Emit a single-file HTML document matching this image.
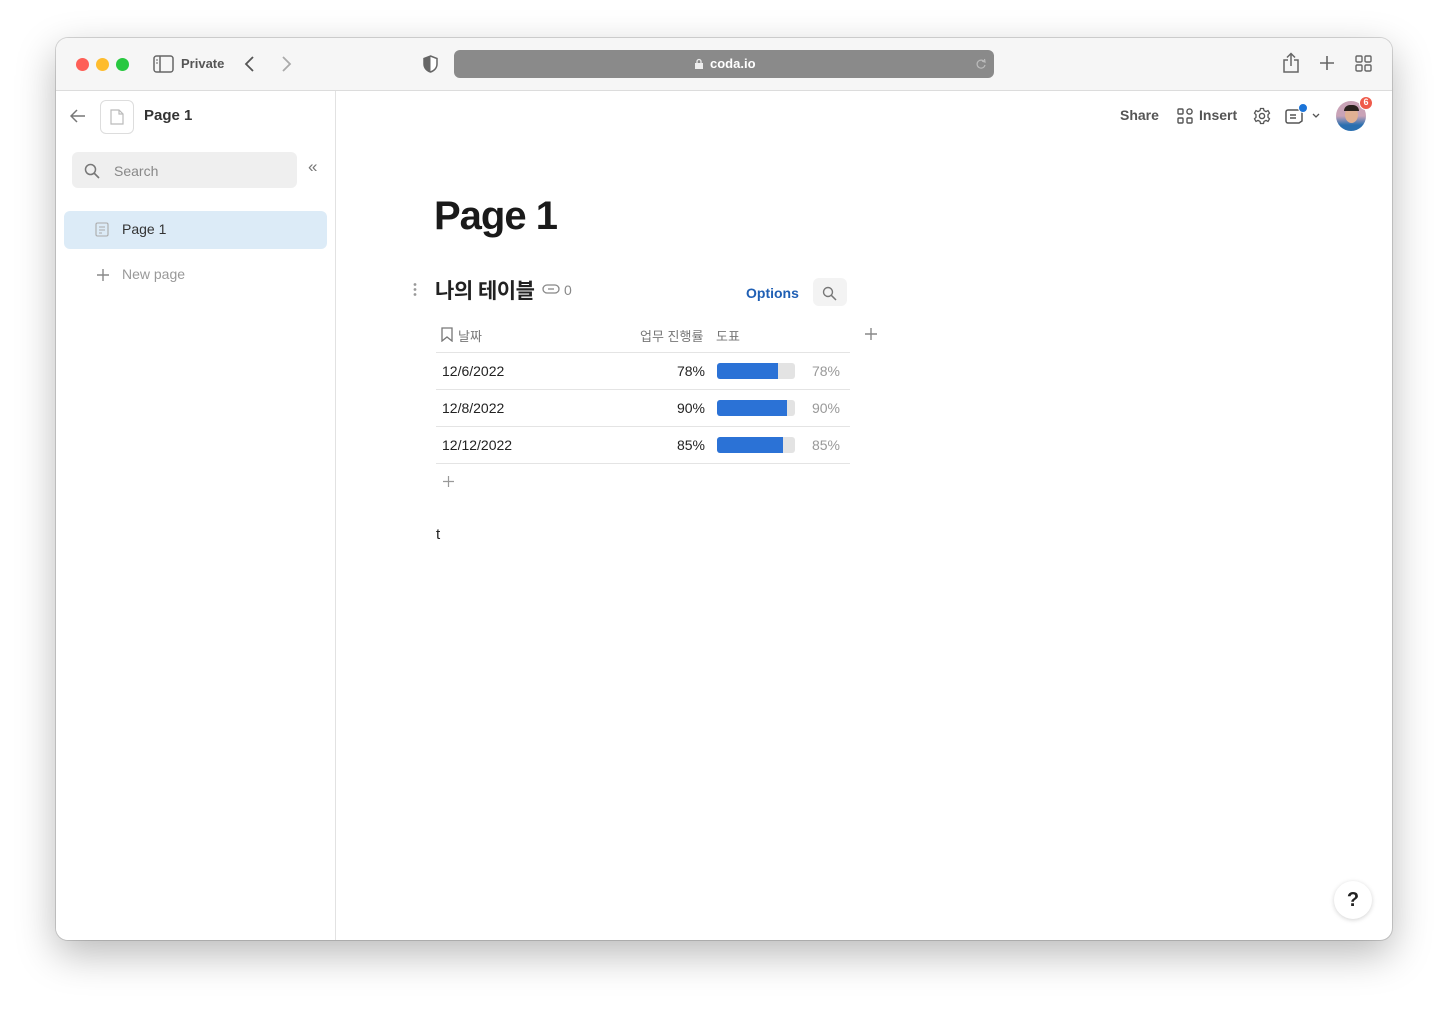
<!DOCTYPE html>
<html><head><meta charset="utf-8"><style>
*{box-sizing:border-box;margin:0;padding:0}
body{width:1448px;height:1014px;background:#fff;font-family:"Liberation Sans","Noto Sans CJK KR",sans-serif;position:relative;overflow:hidden;color:#222}
.win{position:absolute;left:56px;top:38px;width:1336px;height:902px;border-radius:12px;background:#fff;box-shadow:0 14px 40px rgba(0,0,0,.28),0 0 0 1px rgba(0,0,0,.15);overflow:hidden}
.tb{position:absolute;left:0;top:0;width:100%;height:53px;background:#f6f6f6;border-bottom:1px solid #dcdcdc}
.dot{position:absolute;top:20px;width:13px;height:13px;border-radius:50%}
.abs{position:absolute}
.side{position:absolute;left:0;top:53px;width:280px;bottom:0;border-right:1px solid #e2e2e2;background:#fff}
svg{position:absolute}
</style></head><body>
<div class="win">
 <div class="tb">
  <div class="dot" style="left:20px;background:#fe5f57"></div>
  <div class="dot" style="left:40px;background:#febc2e"></div>
  <div class="dot" style="left:60px;background:#28c840"></div>
  <svg style="left:97px;top:17px" width="21" height="18" viewBox="0 0 21 18"><rect x="1" y="1" width="19" height="16" rx="2.5" fill="none" stroke="#666" stroke-width="1.5"/><line x1="7" y1="1" x2="7" y2="17" stroke="#666" stroke-width="1.5"/><line x1="3" y1="5" x2="5" y2="5" stroke="#666"/><line x1="3" y1="8" x2="5" y2="8" stroke="#666"/></svg>
  <div class="abs" style="left:125px;top:18px;font-size:13px;font-weight:bold;color:#555">Private</div>
  <svg style="left:188px;top:17px" width="12" height="18"><path d="M9 2 L2 9 L9 16" fill="none" stroke="#555" stroke-width="1.8"/></svg>
  <svg style="left:224px;top:17px" width="12" height="18"><path d="M3 2 L10 9 L3 16" fill="none" stroke="#aaa" stroke-width="1.8"/></svg>
  <svg style="left:367px;top:17px" width="15" height="18"><path d="M7.5 1 L14 3.5 V9 C14 13 11 16 7.5 17 C4 16 1 13 1 9 V3.5 Z" fill="#fff" stroke="#666" stroke-width="1.5"/><path d="M7.5 1 V17 C4 16 1 13 1 9 V3.5Z" fill="#666"/></svg>
  <div class="abs" style="left:398px;top:12px;width:540px;height:28px;border-radius:6px;background:#8a8a8a"></div>
  <svg style="left:638px;top:20px" width="10" height="12"><rect x="1" y="5" width="8" height="6" fill="#eee"/><path d="M3 5 V3.5 A2 2 0 0 1 7 3.5 V5" fill="none" stroke="#eee" stroke-width="1.3"/></svg>
  <div class="abs" style="left:654px;top:18px;font-size:13px;color:#fff;font-weight:bold">coda.io</div>
  <svg style="left:919px;top:20px" width="12" height="12"><path d="M9.5 4 A4 4 0 1 0 10 7" fill="none" stroke="#bbb" stroke-width="1.2"/><path d="M7 3 L10 4 L9.5 1" fill="none" stroke="#bbb" stroke-width="1.2"/></svg>
  <svg style="left:1226px;top:14px" width="18" height="22"><path d="M6 8 H2 V20 H16 V8 H12" fill="none" stroke="#666" stroke-width="1.5"/><path d="M9 14 V2 M5 5.5 L9 1.5 L13 5.5" fill="none" stroke="#666" stroke-width="1.5"/></svg>
  <svg style="left:1263px;top:17px" width="16" height="16"><path d="M8 1 V15 M1 8 H15" stroke="#666" stroke-width="1.6"/></svg>
  <svg style="left:1299px;top:17px" width="17" height="17"><g fill="none" stroke="#666" stroke-width="1.4"><rect x="1" y="1" width="6" height="6" rx="1.2"/><rect x="10" y="1" width="6" height="6" rx="1.2"/><rect x="1" y="10" width="6" height="6" rx="1.2"/><rect x="10" y="10" width="6" height="6" rx="1.2"/></g></svg>
 </div>
 <div class="side">
  <svg style="left:14px;top:18px" width="16" height="14"><path d="M7 1 L1 7 L7 13 M1 7 H15" fill="none" stroke="#777" stroke-width="1.5"/></svg>
  <div class="abs" style="left:44px;top:9px;width:34px;height:34px;border:1px solid #ddd;border-radius:6px"></div>
  <svg style="left:54px;top:18px" width="14" height="16"><path d="M1 1 H9 L13 5 V15 H1 Z M9 1 V5 H13" fill="none" stroke="#bbb" stroke-width="1.2"/></svg>
  <div class="abs" style="left:88px;top:16px;font-size:15px;font-weight:bold;color:#333">Page 1</div>
  <div class="abs" style="left:16px;top:61px;width:225px;height:36px;border-radius:6px;background:#efefef"></div>
  <svg style="left:28px;top:72px" width="16" height="16"><circle cx="6.5" cy="6.5" r="5" fill="none" stroke="#777" stroke-width="1.5"/><path d="M10 10 L15 15" stroke="#777" stroke-width="1.6"/></svg>
  <div class="abs" style="left:58px;top:72px;font-size:14px;color:#888">Search</div>
  <div class="abs" style="left:252px;top:66px;font-size:17px;color:#777">«</div>
  <div class="abs" style="left:8px;top:120px;width:263px;height:38px;border-radius:6px;background:#dcebf7"></div>
  <svg style="left:39px;top:131px" width="14" height="15"><rect x="1" y="1" width="12" height="13" rx="1.5" fill="none" stroke="#aaa" stroke-width="1.1"/><path d="M4 5 H10 M4 8 H10 M4 11 H7" stroke="#aaa"/></svg>
  <div class="abs" style="left:66px;top:130px;font-size:14px;color:#333">Page 1</div>
  <svg style="left:40px;top:177px" width="14" height="14"><path d="M7 1 V13 M1 7 H13" stroke="#888" stroke-width="1.4"/></svg>
  <div class="abs" style="left:66px;top:175px;font-size:14px;color:#999">New page</div>
 </div>
 <!-- header right -->
 <div class="abs" style="left:1064px;top:69px;font-size:14px;font-weight:bold;color:#555">Share</div>
 <svg style="left:1121px;top:70px" width="16" height="16"><g fill="none" stroke="#555" stroke-width="1.4"><rect x="1" y="1" width="5" height="5" rx="1"/><circle cx="12.5" cy="3.5" r="2.6"/><rect x="1" y="10" width="5" height="5" rx="1"/><rect x="10" y="10" width="5" height="5" rx="1"/></g></svg>
 <div class="abs" style="left:1143px;top:69px;font-size:14px;font-weight:bold;color:#555">Insert</div>
 <svg style="left:1197px;top:69px" width="18" height="18" viewBox="0 0 18 18"><circle cx="9" cy="9" r="2.6" fill="none" stroke="#555" stroke-width="1.4"/><path d="M7.5 1.5 H10.5 L11 3.6 L13 4.6 L15 3.6 L16.5 6.2 L15 7.7 V10.3 L16.5 11.8 L15 14.4 L13 13.4 L11 14.4 L10.5 16.5 H7.5 L7 14.4 L5 13.4 L3 14.4 L1.5 11.8 L3 10.3 V7.7 L1.5 6.2 L3 3.6 L5 4.6 L7 3.6 Z" fill="none" stroke="#555" stroke-width="1.3"/></svg>
 <svg style="left:1229px;top:70px" width="20" height="17"><path d="M3 2 H15 A2 2 0 0 1 17 4 V13 L14 15 H3 A2 2 0 0 1 1 13 V4 A2 2 0 0 1 3 2Z" fill="none" stroke="#555" stroke-width="1.5"/><path d="M5 7 H11 M5 10 H11" stroke="#555" stroke-width="1.4"/></svg>
 <div class="abs" style="left:1242px;top:65px;width:10px;height:10px;border-radius:50%;background:#1b74d8;border:1.5px solid #fff"></div>
 <svg style="left:1256px;top:75px" width="8" height="6"><path d="M1 1 L4 4 L7 1" fill="none" stroke="#555" stroke-width="1.3"/></svg>
 <div class="abs" style="left:1280px;top:63px;width:30px;height:30px;border-radius:50%;background:linear-gradient(#c9a3b7 0,#c9a3b7 50%,#2a6fb0 80%);overflow:hidden"><div style="position:absolute;left:9px;top:6px;width:13px;height:16px;border-radius:50%;background:#e0b093"></div><div style="position:absolute;left:8px;top:4px;width:15px;height:6px;border-radius:6px 6px 0 0;background:#2a221e"></div></div>
 <div class="abs" style="left:1303px;top:58px;width:14px;height:14px;border-radius:50%;background:#ef5b4b;border:1.5px solid #fff;color:#fff;font-size:9px;font-weight:bold;text-align:center;line-height:11px">6</div>
 <!-- content -->
 <div class="abs" style="left:378px;top:156px;font-size:40px;font-weight:bold;color:#1a1a1a;letter-spacing:-1px">Page 1</div>
 <svg style="left:357px;top:244px" width="4" height="16"><circle cx="2" cy="2.5" r="1.4" fill="#999"/><circle cx="2" cy="7.5" r="1.4" fill="#999"/><circle cx="2" cy="12.5" r="1.4" fill="#999"/></svg>
 <div class="abs" style="left:379px;top:237px;font-size:21px;font-weight:bold;color:#222;letter-spacing:-0.5px">나의 테이블</div>
 <svg style="left:486px;top:246px" width="18" height="10"><rect x="1" y="1" width="16" height="8" rx="4" fill="none" stroke="#888" stroke-width="1.3"/><path d="M6 5 H12" stroke="#888" stroke-width="1.3"/></svg>
 <div class="abs" style="left:508px;top:244px;font-size:14px;color:#888">0</div>
 <div class="abs" style="left:690px;top:247px;font-size:14px;font-weight:bold;color:#1f5fb4">Options</div>
 <div class="abs" style="left:757px;top:240px;width:34px;height:28px;border-radius:6px;background:#f3f3f3"></div>
 <svg style="left:766px;top:248px" width="15" height="15"><circle cx="6" cy="6" r="4.5" fill="none" stroke="#777" stroke-width="1.4"/><path d="M9.3 9.3 L14 14" stroke="#777" stroke-width="1.5"/></svg>
 <svg style="left:385px;top:289px" width="12" height="15"><path d="M1 1 H11 V14 L6 10 L1 14 Z" fill="none" stroke="#777" stroke-width="1.3"/></svg>
 <div class="abs" style="left:402px;top:288px;font-size:13px;color:#777">날짜</div>
 <div class="abs" style="left:584px;top:288px;font-size:13px;color:#777">업무 진행률</div>
 <div class="abs" style="left:660px;top:288px;font-size:13px;color:#777">도표</div>
 <svg style="left:808px;top:289px" width="14" height="14"><path d="M7 1 V13 M1 7 H13" stroke="#888" stroke-width="1.4"/></svg>
 <div class="abs" style="left:380px;top:314px;width:414px;height:1px;background:#e4e4e4"></div>
 <div class="abs" style="left:380px;top:351px;width:414px;height:1px;background:#e4e4e4"></div>
 <div class="abs" style="left:380px;top:388px;width:414px;height:1px;background:#e4e4e4"></div>
 <div class="abs" style="left:380px;top:425px;width:414px;height:1px;background:#e4e4e4"></div>

 <div class="abs" style="left:386px;top:325px;font-size:14px;color:#222">12/6/2022</div>
 <div class="abs" style="left:600px;top:325px;width:49px;text-align:right;font-size:14px;color:#222">78%</div>
 <div class="abs" style="left:661px;top:325px;width:78px;height:16px;border-radius:3px;background:#e3e3e3"><div style="width:61px;height:16px;border-radius:3px 0 0 3px;background:#2b72d6"></div></div>
 <div class="abs" style="left:740px;top:325px;width:44px;text-align:right;font-size:14px;color:#999">78%</div>

 <div class="abs" style="left:386px;top:362px;font-size:14px;color:#222">12/8/2022</div>
 <div class="abs" style="left:600px;top:362px;width:49px;text-align:right;font-size:14px;color:#222">90%</div>
 <div class="abs" style="left:661px;top:362px;width:78px;height:16px;border-radius:3px;background:#e3e3e3"><div style="width:70px;height:16px;border-radius:3px 0 0 3px;background:#2b72d6"></div></div>
 <div class="abs" style="left:740px;top:362px;width:44px;text-align:right;font-size:14px;color:#999">90%</div>

 <div class="abs" style="left:386px;top:399px;font-size:14px;color:#222">12/12/2022</div>
 <div class="abs" style="left:600px;top:399px;width:49px;text-align:right;font-size:14px;color:#222">85%</div>
 <div class="abs" style="left:661px;top:399px;width:78px;height:16px;border-radius:3px;background:#e3e3e3"><div style="width:66px;height:16px;border-radius:3px 0 0 3px;background:#2b72d6"></div></div>
 <div class="abs" style="left:740px;top:399px;width:44px;text-align:right;font-size:14px;color:#999">85%</div>

 <svg style="left:387px;top:438px" width="11" height="11"><path d="M5.5 0 V11 M0 5.5 H11" stroke="#999" stroke-width="1.2"/></svg>
 <div class="abs" style="left:380px;top:488px;font-size:15px;color:#222">t</div>
 <div class="abs" style="left:1278px;top:843px;width:38px;height:38px;border-radius:50%;background:#fff;box-shadow:0 1px 5px rgba(0,0,0,.18);text-align:center;line-height:38px;font-size:20px;font-weight:bold;color:#222">?</div>
</div>
</body></html>
